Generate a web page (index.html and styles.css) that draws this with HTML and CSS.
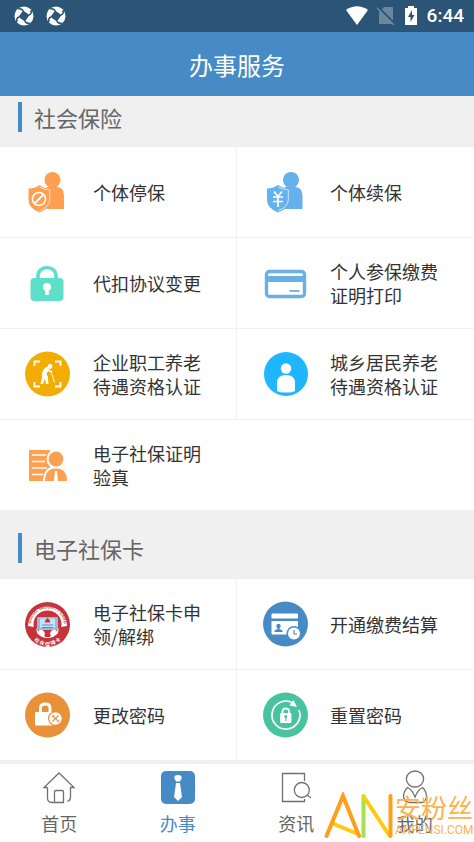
FILE: index.html
```html
<!DOCTYPE html>
<html lang="zh-CN">

<head>
    <meta charset="UTF-8">
    <meta name="viewport" content="width=device-width, initial-scale=1.0">
    <title>办事服务</title>
    <link rel="stylesheet" href="styles.css">
</head>

<body>
    <div class="layout">
        <div class="status">
            <svg class="app-icon" viewBox="0 0 20 20">
                <g id="swirl">
                    <circle cx="10" cy="10" r="9.500" fill="#fff" />
                    <path d="M9 4.500L15.500 9L11 15.500L4.500 11Z" fill="#2c5476" />
                    <path d="M9 5Q8 2 4 3M15 9Q18 8 17 4M11 15Q12 18 16 17M5 11Q2 12 3 16" fill="none" stroke="#2c5476" stroke-width="1.600" />
                </g>
            </svg>
            <svg class="app-icon" viewBox="0 0 20 20">
                <use href="#swirl" />
            </svg>
            <div class="status-right">
                <svg width="22" height="20" viewBox="0 0 22 20">
                    <path d="M0 4Q11-3.500 22 4L11 19Z" fill="#fff" />
                </svg>
                <svg width="18" height="20" viewBox="0 0 18 20">
                    <path d="M7 1H16V18H2V6Z" fill="#6b879e" />
                    <path d="M1 1L18 18" stroke="#2c5476" stroke-width="2" />
                    <path d="M0 2L17 19" stroke="#6b879e" stroke-width="1.500" />
                </svg>
                <svg width="14" height="20" viewBox="0 0 14 20">
                    <path d="M4 0H10V2H13V19H1V2H4Z" fill="#fff" />
                    <path d="M8 4L4 11H6.500V16L10.500 9H8Z" fill="#2c5476" />
                </svg>
                <span class="time">6:44</span>
            </div>
        </div>

        <header class="header">
            <h1>办事服务</h1>
        </header>

        <main class="content">
            <section>
                <h2>社会保险</h2>
                <div class="grid">
                    <a class="item" href="#">
                        <svg class="icon" viewBox="0 0 45 45">
                            <g fill="#ff9f50">
                                <circle cx="27.500" cy="10" r="8" />
                                <path d="M22 17H33Q39 18 39 26V39H22Z" />
                                <path d="M14.500 15Q19 18.500 26.500 18.500V30Q26 38 14.500 42.500Q3.500 38 3.500 30V18.500Q10 18.500 14.500 15Z" />
                            </g>
                            <path d="M14.500 17Q19 19.800 24.800 19.800V30Q24.300 37 14.500 40.800" fill="none" stroke="#ffe3cc" stroke-width="1" />
                            <circle cx="14" cy="29" r="6.500" fill="none" stroke="#fff" stroke-width="1.600" />
                            <path d="M10 33L18.500 24.500" stroke="#fff" stroke-width="1.800" />
                        </svg>
                        <span>个体停保</span>
                    </a>
                    <a class="item" href="#">
                        <svg class="icon" viewBox="0 0 45 45">
                            <g fill="#64b1ec">
                                <circle cx="29" cy="10" r="8" />
                                <path d="M23 17H34Q40.500 18 40.500 26V39H23Z" />
                                <path d="M16 15Q21 18.500 28 18.500V30Q27.500 38 16 42.500Q5 38 5 30V18.500Q11 18.500 16 15Z" />
                            </g>
                            <path d="M16 17Q21 19.800 26.300 19.800V30Q25.800 37 16 40.800" fill="none" stroke="#cde6fa" stroke-width="1" />
                            <path d="M12 21.500L16 26.500L20 21.500M11 27H21M11 31.500H21M16 26.500V37" fill="none" stroke="#fff" stroke-width="1.700" />
                        </svg>
                        <span>个体续保</span>
                    </a>
                    <a class="item" href="#">
                        <svg class="icon" viewBox="0 0 45 45">
                            <path d="M13 19V14.500A9 8 0 0 1 31 14.500V19" fill="none" stroke="#5edfc8" stroke-width="3.600" />
                            <rect x="5.500" y="17" width="33" height="23" rx="4" fill="#5edfc8" />
                            <circle cx="22" cy="26" r="4" fill="#fff" />
                            <path d="M22 26V34" stroke="#fff" stroke-width="3.600" />
                        </svg>
                        <span>代扣协议变更</span>
                    </a>
                    <a class="item" href="#">
                        <svg class="icon" viewBox="0 0 45 45">
                            <rect x="4.500" y="10.500" width="38" height="25" rx="3" fill="#fff" stroke="#68b0e6" stroke-width="3.400" />
                            <path d="M4 18H43" stroke="#68b0e6" stroke-width="6" />
                            <path d="M27.500 30H37.500" stroke="#68b0e6" stroke-width="1.800" />
                        </svg>
                        <span>个人参保缴费证明打印</span>
                    </a>
                    <a class="item" href="#">
                        <svg class="icon" viewBox="0 0 45 45">
                            <circle cx="22.500" cy="22" r="22.500" fill="#f2ad00" />
                            <path d="M9.500 14V9.500H15M30 9.500H35.500V14M35.500 30V34.500H30M15 34.500H9.500V30" fill="none" stroke="#fff" stroke-width="1.800" />
                            <circle cx="25" cy="14.500" r="2.400" fill="#fff" />
                            <path d="M22.500 14.500Q17 16.500 16.800 24L17 26L15.500 32H18L20 26.500L21 32H23.500L22.800 24.500L21.500 22L23 19L25.500 20.500L28 19.500L24.500 18Z" fill="#fff" />
                            <path d="M26 19L29.500 30.500" stroke="#fff" stroke-width=".9" />
                        </svg>
                        <span>企业职工养老待遇资格认证</span>
                    </a>
                    <a class="item" href="#">
                        <svg class="icon" viewBox="0 0 45 45">
                            <circle cx="24" cy="22" r="22" fill="#1fb6ff" />
                            <circle cx="24" cy="16.500" r="5.200" fill="#fff" />
                            <path d="M15 39V31Q15 23 24 23T33 31V39Q29 41 24 40.500Q19 41 15 39Z" fill="#fff" />
                        </svg>
                        <span>城乡居民养老待遇资格认证</span>
                    </a>
                    <a class="item wide" href="#">
                        <svg class="icon" viewBox="0 0 45 45">
                            <path d="M4 7H25V38H4Z" fill="#ff9f50" />
                            <path d="M7 12H21M7 18.500H20M7 25H22M7 31.500H18" stroke="#fff" stroke-width="1.300" />
                            <path d="M18 40Q18 23 31 23T44 40Z" fill="#fff" />
                            <circle cx="31" cy="16" r="9.500" fill="#fff" />
                            <circle cx="31" cy="16" r="7.400" fill="#ff9f50" />
                            <path d="M20 38Q20 25.500 31 25.500T42 38Z" fill="#ff9f50" />
                            <path d="M30 28H32L33 38H29Z" fill="#fff" />
                        </svg>
                        <span>电子社保证明验真</span>
                    </a>
                </div>
            </section>

            <section>
                <h2>电子社保卡</h2>
                <div class="grid">
                    <a class="item" href="#">
                        <svg class="icon" viewBox="0 0 45 45">
                            <defs>
                                <path id="ring-top" d="M6.300 26A16.500 16.500 0 1 1 38.700 26" />
                                <path id="ring-bottom" d="M3 24A19.500 19.500 0 0 0 42 24" />
                            </defs>
                            <circle cx="22.500" cy="22.500" r="22.500" fill="#c4343a" />
                            <path d="M3 24A19.500 19.500 0 0 1 42 24L36 25H9Z" fill="#fff" />
                            <circle cx="22.500" cy="22.500" r="14" fill="#c4343a" />
                            <path d="M10.500 22Q11 30 18 31L20 35H25L27 31Q34 30 34.500 22L33 31Q29 36 22.500 36T12 31Z" fill="#fff" />
                            <rect x="12" y="15" width="21" height="13" rx="1" fill="#8ebce3" />
                            <rect x="15" y="16.500" width="15" height="9" fill="#c9e1f3" />
                            <path d="M22.500 16L25 18.500V20.500H20V18.500Z" fill="#c4343a" />
                            <path d="M17 23H28M17 25.500H28" stroke="#3d76b5" stroke-width=".8" />
                            <path d="M14 28Q19 27 20 32L18 35Q14 32 14 28ZM31 28Q26 27 25 32L27 35Q31 32 31 28Z" fill="#fff" />
                            <text class="seal-en"><textPath href="#ring-top" startOffset="50%">SOCIAL SECURITY CARD</textPath></text>
                            <text class="seal-cn"><textPath href="#ring-bottom" startOffset="50%">社 会 保 障 卡</textPath></text>
                        </svg>
                        <span>电子社保卡申领/解绑</span>
                    </a>
                    <a class="item" href="#">
                        <svg class="icon" viewBox="0 0 45 45">
                            <circle cx="23.500" cy="22" r="22.500" fill="#468bc5" />
                            <path d="M9.500 12.500Q9.500 11.500 10.500 11.500H35Q36 11.500 36 12.500V16.500H9.500ZM9.500 19H36V32.500H10.500Q9.500 32.500 9.500 31.500Z" fill="#fff" />
                            <circle cx="16.500" cy="24" r="2.200" fill="#468bc5" />
                            <path d="M15.500 25H17.500V27L20.500 28.500V30H12.500V28.500L15.500 27Z" fill="#468bc5" />
                            <circle cx="32" cy="31.500" r="7.500" fill="#468bc5" />
                            <circle cx="32" cy="31.500" r="6" fill="#fff" />
                            <path d="M32 28V32H35" fill="none" stroke="#468bc5" stroke-width="1.200" />
                        </svg>
                        <span>开通缴费结算</span>
                    </a>
                    <a class="item" href="#">
                        <svg class="icon" viewBox="0 0 45 45">
                            <circle cx="22.500" cy="22" r="22.500" fill="#e89138" />
                            <path d="M15.500 20V15Q15.500 11 20.200 11T25 15V20" fill="none" stroke="#fff" stroke-width="3" />
                            <rect x="10" y="19" width="20" height="13.500" rx="1" fill="#fff" />
                            <circle cx="30.500" cy="25.500" r="7.500" fill="#e89138" />
                            <circle cx="30.500" cy="25.500" r="6.200" fill="#fff" />
                            <path d="M27.500 22.500L33.500 28.500M33.500 22.500L27.500 28.500" stroke="#e89138" stroke-width="1.100" />
                            <path d="M27 24L29 22M32.500 29.500L34.500 27.500" stroke="#e89138" stroke-width="1" />
                        </svg>
                        <span>更改密码</span>
                    </a>
                    <a class="item" href="#">
                        <svg class="icon" viewBox="0 0 45 45">
                            <circle cx="23.500" cy="22" r="22.500" fill="#49c39f" />
                            <path d="M37 17A14 14 0 1 1 31 10" fill="none" stroke="#fff" stroke-width="1.700" />
                            <path d="M31.500 7L35 14L27.500 12.500Z" fill="#fff" />
                            <path d="M20.500 20.500V18.500Q20.500 15.500 23.800 15.500T27 18.500V20.500" fill="none" stroke="#fff" stroke-width="1.800" />
                            <rect x="18.200" y="20" width="11.200" height="10" rx="1" fill="#fff" />
                            <circle cx="23.800" cy="23.500" r="1.500" fill="#49c39f" />
                            <path d="M23.800 24V28" stroke="#49c39f" stroke-width="1.200" />
                        </svg>
                        <span>重置密码</span>
                    </a>
                </div>
            </section>
        </main>

        <nav class="nav">
            <a href="#">
                <svg viewBox="0 0 36 36">
                    <path d="M6.500 17.500V28Q6.500 32.500 11 32.500H22.500V22Q22.500 20.500 21 20.500H15Q13.500 20.500 13.500 22V32.500M6.500 17.500H3L18 3L33 17.500H29.500V27Q29.500 30.500 26.500 31.500" />
                </svg>
                <span>首页</span>
            </a>
            <a class="active" href="#">
                <svg viewBox="0 0 36 36">
                    <rect class="tie-bg" x="1" y="1" width="34" height="33" rx="5" />
                    <path class="tie" d="M14.500 6Q18 4 21.500 6V9L19.800 11.500H16.200L14.500 9ZM16 13H20L22 27L18 31L14 27Z" />
                </svg>
                <span>办事</span>
            </a>
            <a href="#">
                <svg viewBox="0 0 36 36">
                    <path d="M26.500 11V3.500H4.500V31.500H26.500V29" />
                    <circle cx="23.800" cy="20" r="7.500" />
                    <path d="M29 25L33 28" />
                </svg>
                <span>资讯</span>
            </a>
            <a href="#">
                <svg viewBox="0 0 36 36">
                    <ellipse cx="18" cy="9" rx="8.600" ry="8" />
                    <path d="M10.500 17.500Q6.500 21 6.500 27Q8 32.500 13 32.500H24Q28.500 32.500 29.500 27Q29.500 21 25.500 17.500Q21 19.500 18 27Q15 19.500 10.500 17.500Z" />
                </svg>
                <span>我的</span>
            </a>
            <!-- site mark, lies over the last tab -->
            <div class="mark">
                <svg width="73" height="48" viewBox="0 0 73 48">
                    <g fill="none" stroke-width="4" stroke-linecap="round">
                        <path d="M12 32L36 42" stroke="#ffc814" />
                        <path d="M4.500 44L21 4L37 44" stroke="#ff9d1c" />
                        <path d="M41.500 44V4" stroke="#a6e04c" />
                        <path d="M42 5L67 43" stroke="#ffcb0d" />
                        <path d="M68.500 4V44" stroke="#ff9d1c" />
                    </g>
                </svg>
                <div class="mark-text">
                    <span class="mark-cn">安粉丝</span>
                    <span class="mark-en">ANFENSI.COM</span>
                </div>
            </div>
        </nav>
    </div>
</body>

</html>
```
FILE: styles.css
```css
* {
    box-sizing: border-box;
}

:root {
    --blue: #468bc5;
    --line: #f0f0f0;
    font-family: "Noto Sans CJK SC", sans-serif;
}

body {
    margin: 0;
    background-color: var(--line);
}

a {
    color: inherit;
    text-decoration: none;
}

.layout {
    display: flex;
    flex-direction: column;
    min-height: 100vh;
}

.status {
    display: flex;
    align-items: center;
    gap: 12px;
    height: 32px;
    padding: 0 10px 0 14px;
    background-color: #2c5476;
}

.app-icon {
    width: 20px;
    height: 20px;
}

.status-right {
    display: flex;
    align-items: center;
    gap: 9px;
    margin-left: auto;
}

.time {
    color: white;
    font-family: Roboto, sans-serif;
    font-size: 19px;
    font-weight: 500;
    line-height: 24px;
}

.header {
    height: 64px;
    background-color: var(--blue);
    color: white;
    text-align: center;
}

h1 {
    margin: 0;
    font-size: 24px;
    font-weight: 400;
    line-height: 66px;
}

.content {
    flex: 1;
}

h2 {
    display: flex;
    align-items: center;
    gap: 12px;
    margin: 0;
    padding: 23px 18px 16px;
    color: #666;
    font-size: 22px;
    font-weight: 400;
    line-height: 28px;
}

section:first-child h2 {
    padding-top: 6px;
    padding-bottom: 15px;
}

h2::before {
    content: "";
    width: 4px;
    height: 30px;
    background-color: var(--blue);
}

.grid {
    display: grid;
    grid-template-columns: 1fr 1fr;
    row-gap: 1px;
}

.item {
    display: flex;
    align-items: center;
    gap: 23px;
    min-height: 90px;
    padding: 0 30px 0 25px;
    background-color: white;
    color: #333;
    font-size: 18px;
    line-height: 24px;
}

.item:nth-child(odd) {
    border-right: 1px solid var(--line);
}

.item.wide {
    grid-column: span 2;
    padding-right: 50%;
    border-right: 0;
}

.item.wide span {
    max-width: 114px;
}

.icon {
    flex: none;
    width: 45px;
    height: 45px;
    overflow: visible;
}

.seal-en,
.seal-cn {
    font-size: 4px;
    font-weight: 700;
    text-anchor: middle;
}

.seal-en {
    fill: #c4343a;
    font-family: "Liberation Sans", sans-serif;
}

.seal-cn {
    fill: white;
    font-size: 5px;
}

.nav {
    position: sticky;
    bottom: 0;
    display: flex;
    border-top: 4px solid var(--line);
    background-color: white;
}

.nav a {
    display: flex;
    flex: 1;
    flex-direction: column;
    align-items: center;
    gap: 5px;
    padding: 6px 0 7px;
    color: #666;
    font-size: 18px;
    line-height: 24px;
}

.nav a svg {
    width: 36px;
    height: 36px;
    fill: none;
    stroke: #707070;
    stroke-width: 1.3;
}

.nav a.active {
    color: var(--blue);
}

.nav .tie-bg {
    fill: var(--blue);
    stroke: none;
}

.nav .tie {
    fill: white;
    stroke: none;
}

.mark {
    position: absolute;
    right: 0;
    bottom: 2px;
    display: flex;
    pointer-events: none;
}

.mark-text {
    display: flex;
    flex-direction: column;
    width: 79px;
    color: #fbb34c;
    white-space: nowrap;
}

.mark-cn {
    font-size: 26px;
    font-weight: 400;
    line-height: 30px;
}

.mark-en {
    font-family: Roboto, sans-serif;
    font-size: 12px;
    line-height: 16px;
}
```
